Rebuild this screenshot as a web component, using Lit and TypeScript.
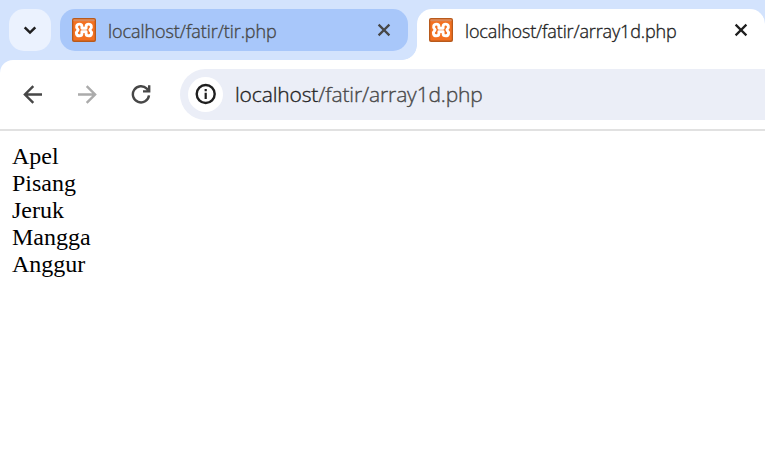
import { LitElement, html, css, svg } from "lit";
import { customElement } from "lit/decorators.js";

const xampp = html`<svg class="favicon" width="24" height="24" viewBox="0 0 24 24">
  <rect x="0" y="0" width="24" height="24" rx="2" fill="#b85a1c" />
  <rect x="1.3" y="1.3" width="21.4" height="21.2" rx="1" fill="#f37021" />
  <rect x="1.3" y="1.2" width="21.4" height="2" rx="1" fill="#d98a5c" />
  <path
    d="M9.9 10.3V8.4C9.9 6.7 8.9 6.1 7.4 6.1C4.6 6.1 3.6 9.4 5.7 11.1C6.2 11.6 6.2 12.2 5.7 12.7C3.4 14.6 4.4 17.8 7.2 17.8C9 17.8 9.9 17.1 9.9 15.4V13.6H14.1V15.4C14.1 17.1 15 17.8 16.8 17.8C19.6 17.8 20.6 14.6 18.3 12.7C17.8 12.2 17.8 11.6 18.3 11.1C20.4 9.4 19.4 6.1 16.6 6.1C15.1 6.1 14.1 6.7 14.1 8.4V10.3Z"
    fill="none" stroke="#fff" stroke-width="2.9" stroke-linejoin="round" />
</svg>`;

const glyph = (size: number, d: string, width = 2.2) => html`<svg
  width=${size} height=${size} viewBox="0 0 ${size} ${size}" fill="none"
  stroke="currentColor" stroke-width=${width}>${svg`<path d=${d} />`}</svg>`;

const cross = glyph(14, "M1.6 1.6L12.4 12.4M12.4 1.6L1.6 12.4", 2.2);

@customElement("app-root")
export class AppRoot extends LitElement {
  static styles = css`
    :host {
      display: flex;
      flex-direction: column;
      height: 454px;
      overflow: hidden;
      background: #fff;
      font-family: "Open Sans", "Noto Sans", sans-serif;
    }
    * { box-sizing: border-box; }
    svg { display: block; flex: none; }
    .strip {
      display: flex;
      flex: none;
      height: 60px;
      padding: 9px 0 0 9px;
      background: #d3e3fd;
    }
    .search {
      width: 42px;
      height: 42px;
      margin-right: 9px;
      border-radius: 15px;
      background: #ebf2fe;
      color: #1f1f1f;
      display: grid;
      place-items: center;
    }
    .tab {
      display: flex;
      align-items: center;
      width: 348px;
      height: 42px;
      padding: 0 17px 0 12px;
      border-radius: 15px;
      background: #a8c7fa;
      color: #474747;
      font-size: 18px;
      font-weight: 300;
    }
    .title, .url { -webkit-text-stroke: 0.35px currentColor; }
    .title {
      flex: 1;
      margin-left: 12px;
      line-height: 24px;
      white-space: nowrap;
      padding-top: 1px;
    }
    .active {
      position: relative;
      height: 51px;
      margin-left: 9px;
      padding-bottom: 9px;
      border-radius: 15px 15px 0 0;
      background: #fff;
      color: #1f1f1f;
    }
    .active::before {
      content: "";
      position: absolute;
      left: -15px;
      bottom: 0;
      width: 15px;
      height: 15px;
      background: radial-gradient(circle at 0 0, transparent 14.5px, #fff 15.2px);
    }
    .t1 { letter-spacing: -0.06px; }
    .t2 { letter-spacing: -0.14px; }
    .top { flex: none; background: #d3e3fd; }
    .toolbar {
      display: flex;
      align-items: center;
      height: 71px;
      padding: 0 0 1px 23px;
      border-bottom: 2px solid #e1e1e1;
      border-top-left-radius: 13px;
      background: #fff;
      color: #474747;
    }
    .forward { margin-left: 34px; color: #ababab; }
    .reload { margin-left: 34px; }
    .address {
      display: flex;
      align-items: center;
      flex: 1;
      height: 51px;
      margin-left: 29px;
      padding-left: 8px;
      border-radius: 26px 0 0 26px;
      background: #ebeef7;
      font-size: 21px;
      font-weight: 300;
    }
    .info {
      display: grid;
      place-items: center;
      width: 35px;
      height: 35px;
      border-radius: 50%;
      background: #fff;
      color: #1f1f1f;
    }
    .url {
      margin-left: 12px;
      white-space: nowrap;
      letter-spacing: -0.13px;
      line-height: 28px;
    }
    .host { color: #1f1f1f; }
    .page {
      padding: 12px;
      color: #000;
      font: 24px/27px "Liberation Serif", "Times New Roman", serif;
    }
  `;

  render() {
    return html`
      <div class="strip">
        <div class="search">${glyph(14, "M1.7 4.3L7 9.6L12.3 4.3", 2.5)}</div>
        <div class="tab">${xampp}<span class="title t1">localhost/fatir/tir.php</span>${cross}</div>
        <div class="tab active">${xampp}<span class="title t2">localhost/fatir/array1d.php</span>${cross}</div>
      </div>
      <div class="top">
        <div class="toolbar">
          ${glyph(20, "M19 10.5H2.5M10.3 2.1L1.9 10.5L10.3 18.9", 2.4)}
          <span class="forward">${glyph(20, "M1 10.5H17.5M9.7 2.1L18.1 10.5L9.7 18.9", 2.4)}</span>
          <span class="reload">${glyph(20, "M18 11.4A8.1 8.1 0 1 1 15.8 4.7L18 6.9M18.2 1.2V7.4H12", 2.4)}</span>
          <div class="address">
            <span class="info">
              <svg width="22" height="22" viewBox="0 0 22 22">
                <circle cx="10.7" cy="11" r="9" fill="none" stroke="currentColor" stroke-width="2.4" />
                <path d="M9.6 9.8h2.2v6.2h-2.2zM9.6 6h2.2v2.2h-2.2z" fill="currentColor" />
              </svg>
            </span>
            <span class="url"><span class="host">localhost</span>/fatir/array1d.php</span>
          </div>
        </div>
      </div>
      <div class="page">
        ${["Apel", "Pisang", "Jeruk", "Mangga", "Anggur"].map((f) => html`<div>${f}</div>`)}
      </div>
    `;
  }
}
